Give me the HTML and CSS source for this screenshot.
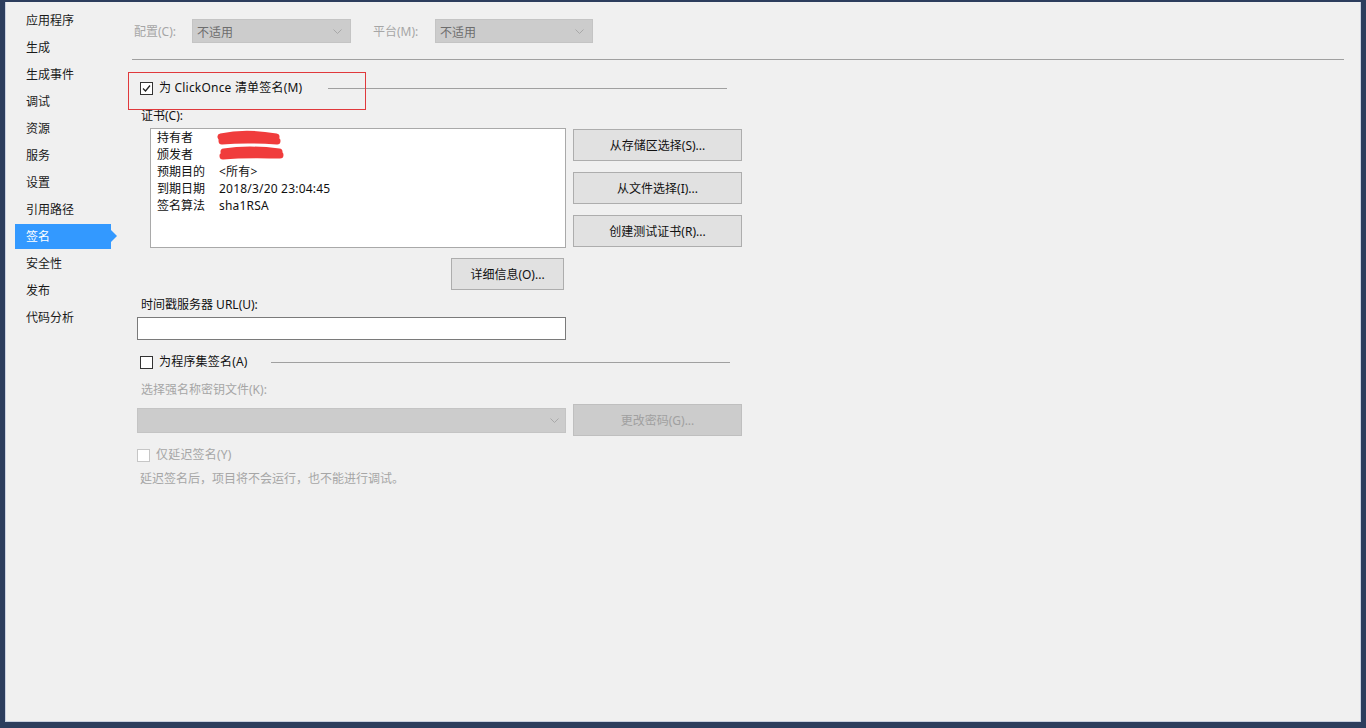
FILE: index.html
```html
<!DOCTYPE html>
<html lang="zh-CN">
<head>
<meta charset="utf-8">
<title>签名</title>
<link rel="stylesheet" href="styles.css">
</head>
<body>
<div class="frame">
  <div class="inner">
    <nav class="sidebar">
      <div class="nav-item"><span class="nav-bar">应用程序</span></div>
      <div class="nav-item"><span class="nav-bar">生成</span></div>
      <div class="nav-item"><span class="nav-bar">生成事件</span></div>
      <div class="nav-item"><span class="nav-bar">调试</span></div>
      <div class="nav-item"><span class="nav-bar">资源</span></div>
      <div class="nav-item"><span class="nav-bar">服务</span></div>
      <div class="nav-item"><span class="nav-bar">设置</span></div>
      <div class="nav-item"><span class="nav-bar">引用路径</span></div>
      <div class="nav-item active"><span class="nav-bar">签名</span></div>
      <div class="nav-item"><span class="nav-bar">安全性</span></div>
      <div class="nav-item"><span class="nav-bar">发布</span></div>
      <div class="nav-item"><span class="nav-bar">代码分析</span></div>
    </nav>

    <main class="main">
      <div class="config-row">
        <span class="cfg-label cfg-label-1">配置(C):</span>
        <div class="select select-cfg"><span class="select-text">不适用</span><svg class="chev" width="9" height="5" viewBox="0 0 9 5"><path d="M0.5 0.5 L4.5 4.5 L8.5 0.5" fill="none" stroke="#a8a8a8" stroke-width="1"/></svg></div>
        <span class="cfg-label cfg-label-2">平台(M):</span>
        <div class="select select-plat"><span class="select-text">不适用</span><svg class="chev" width="9" height="5" viewBox="0 0 9 5"><path d="M0.5 0.5 L4.5 4.5 L8.5 0.5" fill="none" stroke="#a8a8a8" stroke-width="1"/></svg></div>
      </div>

      <div class="hr"></div>

      <div class="check-row row-manifest">
        <span class="checkbox"><svg width="11" height="11" viewBox="0 0 11 11"><path d="M2 5.5 L4.5 8 L9 2.5" fill="none" stroke="#222" stroke-width="1.3"/></svg></span>
        <span class="check-text">为 ClickOnce 清单签名(M)</span>
        <span class="group-line line-1"></span>
      </div>

      <div class="label label-cert">证书(C):</div>

      <div class="cert-area">
        <div class="cert-box">
          <div class="cert-row"><span class="cert-key">持有者</span><span class="cert-val"></span></div>
          <div class="cert-row"><span class="cert-key">颁发者</span><span class="cert-val"></span></div>
          <div class="cert-row"><span class="cert-key">预期目的</span><span class="cert-val">&lt;所有&gt;</span></div>
          <div class="cert-row"><span class="cert-key">到期日期</span><span class="cert-val">2018/3/20 23:04:45</span></div>
          <div class="cert-row"><span class="cert-key">签名算法</span><span class="cert-val">sha1RSA</span></div>
          <svg class="scribble" width="140" height="36" viewBox="0 0 140 36">
            <path d="M70 8 C88 4 108 5 125 8 M71 12 C92 10 112 11 126 12 M75 9 L124 10" fill="none" stroke="#f03c3c" stroke-width="7" stroke-linecap="round"/>
            <path d="M73 23 C92 20 112 21 128 23 M72 27 C95 25 115 26 129 26 M76 25 L127 25" fill="none" stroke="#f03c3c" stroke-width="7" stroke-linecap="round"/>
          </svg>
        </div>
        <div class="cert-buttons">
          <div class="btn btn-cert">从存储区选择(S)...</div>
          <div class="btn btn-cert">从文件选择(I)...</div>
          <div class="btn btn-cert">创建测试证书(R)...</div>
        </div>
      </div>

      <div class="detail-row">
        <div class="btn btn-detail">详细信息(O)...</div>
      </div>

      <div class="label label-ts">时间戳服务器 URL(U):</div>
      <div class="text-input"></div>

      <div class="check-row row-assembly">
        <span class="checkbox"></span>
        <span class="check-text">为程序集签名(A)</span>
        <span class="group-line line-2"></span>
      </div>

      <div class="label label-key disabled-text">选择强名称密钥文件(K):</div>
      <div class="key-row">
        <div class="select select-key"><span class="select-text"></span><svg class="chev" width="9" height="5" viewBox="0 0 9 5"><path d="M0.5 0.5 L4.5 4.5 L8.5 0.5" fill="none" stroke="#a8a8a8" stroke-width="1"/></svg></div>
        <div class="btn btn-disabled">更改密码(G)...</div>
      </div>

      <div class="check-row row-delay">
        <span class="checkbox checkbox-disabled"></span>
        <span class="check-text disabled-text">仅延迟签名(Y)</span>
      </div>

      <div class="note disabled-text">延迟签名后，项目将不会运行，也不能进行调试。</div>

      <div class="annotation"></div>
    </main>
  </div>
</div>
</body>
</html>
```

FILE: styles.css
```css
* { box-sizing: border-box; }

html, body {
  margin: 0;
  padding: 0;
  width: 1366px;
  height: 728px;
  overflow: hidden;
  background: #2c3d5d;
}

body {
  font-family: "Noto Sans", "Noto Sans CJK SC", sans-serif;
  font-size: 12px;
  color: #111;
}

.frame {
  width: 1366px;
  height: 728px;
  border-style: solid;
  border-color: #2c3d5d;
  border-width: 2px 5px 6px 5px;
}

.inner {
  height: 100%;
  background: #f0f0f0;
  border-style: solid;
  border-color: #c9d0e0;
  border-width: 0 1px 1px 1px;
  display: flex;
}

/* sidebar */
.sidebar {
  width: 114px;
  flex: none;
  padding-top: 5px;
  display: flex;
  flex-direction: column;
}

.nav-item {
  height: 27px;
  padding: 1px 0 1px 9px;
  display: flex;
}

.nav-bar {
  position: relative;
  width: 96px;
  height: 25px;
  line-height: 23px;
  padding-top: 1px;
  padding-left: 11px;
  color: #1a1a1a;
}

.nav-item.active .nav-bar {
  background: #3399ff;
  color: #fff;
}

.nav-item.active .nav-bar::after {
  content: "";
  position: absolute;
  right: -6px;
  top: 6px;
  border-style: solid;
  border-width: 6px 0 6px 6px;
  border-color: transparent transparent transparent #3399ff;
}

/* main */
.main {
  position: relative;
  flex: 1;
  padding: 17px 16px 0 12px;
  display: flex;
  flex-direction: column;
  align-items: flex-start;
}

.config-row {
  display: flex;
  align-items: center;
  height: 24px;
}

.cfg-label {
  color: #a6a6a6;
  line-height: 22px;
  padding-top: 2px;
}

.cfg-label-1 { margin-left: 2px; width: 58px; }
.cfg-label-2 { margin-left: 22px; width: 62px; }

.select {
  height: 24px;
  background: #cccccc;
  border: 1px solid #c4c4c4;
  display: flex;
  align-items: center;
  justify-content: space-between;
  padding: 1px 8px 0 4px;
}

.select-text { color: #6d6d6d; }

.select-cfg { width: 159px; }
.select-plat { width: 158px; }

.hr {
  align-self: stretch;
  height: 1px;
  background: #a0a0a0;
  margin-top: 16px;
}

.check-row {
  display: flex;
  align-items: center;
  height: 16px;
}

.row-manifest { margin-top: 20px; margin-left: 8px; width: 587px; }
.row-assembly { margin-top: 14px; margin-left: 8px; width: 590px; }
.row-delay { margin-top: 11px; margin-left: 5px; }

.checkbox {
  width: 13px;
  height: 13px;
  border: 1px solid #333;
  background: #fff;
  display: flex;
  align-items: center;
  justify-content: center;
  flex: none;
}

.checkbox-disabled {
  border-color: #c6c6c6;
}

.check-text {
  margin-left: 6px;
  white-space: nowrap;
  line-height: 16px;
  letter-spacing: 0.2px;
}

.group-line {
  flex: 1;
  height: 1px;
  background: #a0a0a0;
}

.line-1 { margin-left: 26px; }
.line-2 { margin-left: 23px; }

.label {
  height: 17px;
  line-height: 16px;
  margin-left: 9px;
}

.label-cert { margin-top: 12px; }
.label-ts { margin-top: 6px; line-height: 17px; }
.label-key { margin-top: 12px; }

.disabled-text { color: #a6a6a6; }

.cert-area {
  display: flex;
  margin-top: 3px;
  margin-left: 18px;
  gap: 7px;
}

.cert-box {
  position: relative;
  width: 416px;
  height: 120px;
  background: #fff;
  border: 1px solid #a9a9a9;
  padding-left: 6px;
}

.cert-row {
  height: 17px;
  line-height: 17px;
  display: flex;
}

.cert-key { width: 62px; }

.cert-val { letter-spacing: 0.2px; }

.scribble {
  position: absolute;
  left: 0;
  top: 0;
}

.cert-buttons {
  display: flex;
  flex-direction: column;
  gap: 11px;
  padding-top: 1px;
}

.btn {
  height: 32px;
  background: #e1e1e1;
  border: 1px solid #adadad;
  display: flex;
  align-items: center;
  justify-content: center;
  color: #111;
  padding-bottom: 1px;
}

.btn-cert { width: 169px; }

.detail-row {
  width: 416px;
  margin-left: 18px;
  margin-top: 10px;
  display: flex;
  justify-content: flex-end;
  padding-right: 2px;
}

.btn-detail { width: 113px; }

.text-input {
  margin-top: 4px;
  margin-left: 5px;
  width: 429px;
  height: 23px;
  background: #fff;
  border: 1px solid #7a7a7a;
}

.key-row {
  margin-top: 5px;
  margin-left: 5px;
  display: flex;
  align-items: center;
  gap: 7px;
}

.select-key {
  width: 429px;
  height: 25px;
  padding-right: 6px;
}

.btn-disabled {
  width: 169px;
  background: #cccccc;
  border-color: #bfbfbf;
  color: #a0a0a0;
}

.note {
  margin-top: 8px;
  margin-left: 8px;
  height: 17px;
  line-height: 16px;
}

.annotation {
  position: absolute;
  left: 8px;
  top: 70px;
  width: 238px;
  height: 38px;
  border: 1px solid #e0393c;
}
```
